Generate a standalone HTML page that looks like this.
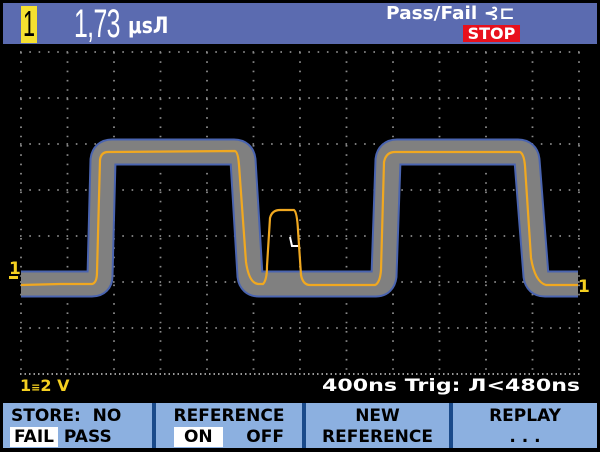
<!DOCTYPE html>
<html><head><meta charset="utf-8"><style>
html,body{margin:0;padding:0;background:#000;width:600px;height:452px;overflow:hidden}
body{position:relative;font-family:"DejaVu Sans","Liberation Sans",sans-serif;font-weight:bold}
.a{position:absolute}
.btn{position:absolute;top:403px;height:45px;background:#8cb0e0;color:#000;font-size:17px;line-height:19px;text-align:center;letter-spacing:0px}
.hl{background:#fff;padding:0 4px}
</style></head><body>
<svg class="a" style="left:0;top:0" width="600" height="452">
<rect x="3" y="3" width="594" height="41" fill="#5b6bb0"/>
<g stroke="#8a8a8a" stroke-width="1.8" stroke-dasharray="1.6 7.7">
<line x1="20" y1="52" x2="580" y2="52"/><line x1="20" y1="98" x2="580" y2="98"/><line x1="20" y1="144" x2="580" y2="144"/><line x1="20" y1="190" x2="580" y2="190"/><line x1="20" y1="236" x2="580" y2="236"/><line x1="20" y1="282" x2="580" y2="282"/><line x1="20" y1="328" x2="580" y2="328"/>
<line x1="21" y1="52" x2="21" y2="374"/><line x1="67.5" y1="52" x2="67.5" y2="374"/><line x1="114" y1="52" x2="114" y2="374"/><line x1="160.5" y1="52" x2="160.5" y2="374"/><line x1="207" y1="52" x2="207" y2="374"/><line x1="253.5" y1="52" x2="253.5" y2="374"/><line x1="300" y1="52" x2="300" y2="374"/><line x1="346.5" y1="52" x2="346.5" y2="374"/><line x1="393" y1="52" x2="393" y2="374"/><line x1="439.5" y1="52" x2="439.5" y2="374"/><line x1="486" y1="52" x2="486" y2="374"/><line x1="532.5" y1="52" x2="532.5" y2="374"/><line x1="579" y1="52" x2="579" y2="374"/>
</g>
<line x1="20" y1="374" x2="580" y2="374" stroke="#ccc" stroke-width="1.5" stroke-dasharray="1.5 3"/>
<path d="M21 284 L92 284 Q100 284 100 276 L103 160 Q104 152 112 152 L234 152 Q242 152 243 160 L250 276 Q251 284 259 284 L376 284 Q383 284 384 276 L388 160 Q389 152 397 152 L518 152 Q526 152 527 160 L536 276 Q537 284 545 284 L578 284" fill="none" stroke="#4a64b0" stroke-width="27" stroke-linejoin="round"/>
<path d="M21 284 L92 284 Q100 284 100 276 L103 160 Q104 152 112 152 L234 152 Q242 152 243 160 L250 276 Q251 284 259 284 L376 284 Q383 284 384 276 L388 160 Q389 152 397 152 L518 152 Q526 152 527 160 L536 276 Q537 284 545 284 L578 284" fill="none" stroke="#808080" stroke-width="23" stroke-linejoin="round"/>
<path d="M21 285 L60 284 L92 284 Q97 283 97 272 L100 160 Q101 152 108 152 L235 151 Q238 152 239 165 L246 262 Q249 283 258 284 L263 284 Q267 280 267 266 L270 218 Q272 210 280 210 L294 210 Q297 212 298 230 L301 275 Q303 285 310 285 L375 285 Q380 283 381 270 L384 162 Q386 152 395 152 L520 152 Q524 154 525 166 L531 258 Q535 282 546 285 L578 285" fill="none" stroke="#f0a820" stroke-width="2.2"/>
<path d="M290 237 L292 246 L298 246" fill="none" stroke="#fff" stroke-width="2"/>
<text x="9" y="274" fill="#f5d020" font-size="17" font-family="DejaVu Sans" font-weight="bold">1</text>
<rect x="9" y="276" width="9" height="3" fill="#f5d020"/>
<text x="578" y="292" fill="#f5d020" font-size="17" font-family="DejaVu Sans" font-weight="bold">1</text>
<rect x="3" y="400" width="594" height="50" fill="#000"/>
</svg>
<div class="a" style="left:21px;top:6px;width:16px;height:37px;background:#f5e030"></div>
<div class="a" style="left:23px;top:3px;font-size:36px;color:#000;transform:scaleX(0.6);transform-origin:0 0;font-weight:normal;font-family:'Liberation Sans'">1</div>
<div class="a" style="left:74px;top:2px;font-size:40px;color:#fff;transform:scaleX(0.62);transform-origin:0 0;font-weight:normal;font-family:'Liberation Sans';letter-spacing:-1px">1,73</div>
<div class="a" style="left:128px;top:14px;font-size:22px;color:#fff;transform:scaleX(0.85);transform-origin:0 0">μsЛ</div>
<div class="a" style="left:386px;top:3px;font-size:18px;color:#fff;transform:scaleX(1.03);transform-origin:0 0">Pass/Fail ⊰⊏</div>
<div class="a" style="left:463px;top:25px;width:57px;height:17px;background:#e8101c;color:#fff;font-size:16px;line-height:17px;text-align:center">STOP</div>
<div class="a" style="left:20px;top:376px;font-size:16px;color:#f5d020">1<span style="font-size:11px">≡</span>2 V</div>
<div class="a" style="left:322px;top:376px;font-size:17px;color:#fff;transform:scaleX(1.3);transform-origin:0 0;white-space:nowrap">400ns Trig: Л&lt;480ns</div>
<div class="btn" style="left:3px;width:149px;text-align:left"><div style="padding:4px 0 0 8px">STORE: &nbsp;NO</div><div style="padding:2px 0 0 7px"><span class="hl">FAIL</span> PASS</div></div>
<div class="btn" style="left:156px;width:146px"><div style="padding-top:4px">REFERENCE</div><div style="padding-top:2px"><span class="hl">&nbsp;ON&nbsp;</span> &nbsp;&nbsp;&nbsp;OFF</div></div>
<div class="btn" style="left:306px;width:143px"><div style="padding-top:4px">NEW</div><div style="padding-top:2px">REFERENCE</div></div>
<div class="btn" style="left:453px;width:144px"><div style="padding-top:4px">REPLAY</div><div style="padding-top:2px">. . .</div></div>
<div class="a" style="left:152px;top:403px;width:4px;height:45px;background:#1a4a8a"></div>
<div class="a" style="left:302px;top:403px;width:4px;height:45px;background:#1a4a8a"></div>
<div class="a" style="left:449px;top:403px;width:4px;height:45px;background:#1a4a8a"></div>
</body></html>
